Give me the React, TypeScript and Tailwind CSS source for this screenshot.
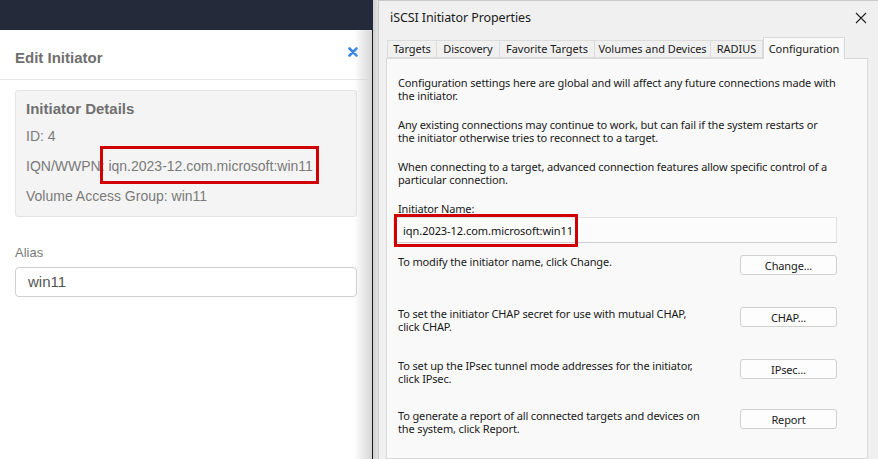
import React from "react";

const Tab = ({ label, w, active }: { label: string; w: string; active?: boolean }) => (
  <div
    className={
      active
        ? `${w} h-[22px] -mb-px relative z-10 bg-[#f9f9f9] border border-[#d9d9d9] border-b-0 flex items-start justify-center pt-[3px] text-[#1a1a1a]`
        : `${w} h-[18px] bg-[#f0f0f0] border border-[#dcdcdc] border-l-0 first:border-l flex items-center justify-center text-[#1a1a1a]`
    }
  >
    {label}
  </div>
);

const WinButton = ({ label }: { label: string }) => (
  <div className="w-[97px] h-[20px] shrink-0 rounded-[3px] border border-[#d0d0d0] bg-[#fdfdfd] flex items-center justify-center text-[#1a1a1a]">
    {label}
  </div>
);

export default function App() {
  return (
    <div className="w-[878px] h-[459px] flex overflow-hidden bg-[#f0f0f0]">
      {/* Left web panel */}
      <div
        className="w-[373px] shrink-0 flex flex-col bg-white"
        style={{ fontFamily: '"Liberation Sans", Arial, sans-serif' }}
      >
        <div className="h-[30px] bg-[#252a3b]" />
        <div className="flex-1 relative border-r border-[#1a1a1a]">
          <div className="h-[50px] border-b border-[#e5e5e5] flex items-center justify-between pl-[15px] pr-[14px]">
            <span className="text-[15px] font-bold text-[#6f6f6f] pt-[8px]">Edit Initiator</span>
            <svg width="10" height="10" viewBox="0 0 10 10" className="-mt-[6px]">
              <path d="M1.5 1.5 L8.5 8.5 M8.5 1.5 L1.5 8.5" stroke="#3a86e0" strokeWidth="2.6" strokeLinecap="round" />
            </svg>
          </div>
          <div className="px-[15px] pt-[10px]">
            <div className="w-[342px] bg-[#f4f4f4] border border-[#e4e4e4] rounded-[3px] pl-[10px] pt-[8px] pb-[5px] text-[#7a7a7a]">
              <div className="h-[20px] leading-[20px] text-[15px] font-bold text-[#707070]">Initiator Details</div>
              <div className="mt-[2px] h-[30px] leading-[30px] text-[14px]">ID: 4</div>
              <div className="h-[30px] leading-[30px] text-[14px] whitespace-nowrap">
                IQN/WWPN:{" "}
                <span className="relative">
                  iqn.2023-12.com.microsoft:win11
                  <span className="absolute left-[-8px] right-[-6px] top-[-12px] bottom-[-10px] border-[3px] border-[#d00000]" />
                </span>
              </div>
              <div className="h-[30px] leading-[30px] text-[14px]">Volume Access Group: win11</div>
            </div>
            <div className="mt-[28px] text-[13px] text-[#7a7a7a] leading-[16px]">Alias</div>
            <div className="mt-[6px] w-[342px] h-[30px] border border-[#cfcfcf] rounded-[4px] flex items-center pl-[12px] text-[15px] text-[#555]">
              win11
            </div>
          </div>
          <div className="absolute top-0 right-0 bottom-0 w-[18px] bg-gradient-to-r from-[#ffffff00] to-[#d6d6d6]" />
        </div>
      </div>

      {/* Windows dialog */}
      <div
        className="flex-1 min-w-0 flex"
        style={{ fontFamily: '"Noto Sans", "Open Sans", sans-serif' }}
      >
        <div className="w-[5px] shrink-0 bg-gradient-to-r from-[#cfcfcf] to-[#e4e4e4]" />
        <div className="flex-1 min-w-0 flex flex-col bg-[#f0f0f0] border-l border-t border-[#c8c8c8]">
          <div className="h-[34px] flex items-center justify-between pl-[11px] pr-[11px]">
            <span className="text-[12.5px] text-[#1a1a1a] tracking-[-0.1px]">iSCSI Initiator Properties</span>
            <svg width="12" height="12" viewBox="0 0 12 12">
              <path d="M1 1 L11 11 M11 1 L1 11" stroke="#222" strokeWidth="1.1" />
            </svg>
          </div>
          <div className="pl-[7px] pr-[10px] flex-1 min-w-0 flex flex-col text-[11px] tracking-[-0.05px]">
            <div className="flex items-end h-[23px] pl-[1px]">
              <Tab label="Targets" w="w-[50px]" />
              <Tab label="Discovery" w="w-[63px]" />
              <Tab label="Favorite Targets" w="w-[95px]" />
              <Tab label="Volumes and Devices" w="w-[116px]" />
              <Tab label="RADIUS" w="w-[52px]" />
              <Tab label="Configuration" w="w-[82px]" active />
            </div>
            <div className="flex-1 min-w-0 bg-[#f9f9f9] border border-[#d9d9d9] pl-[11px] pr-[30px] pt-[17px] text-[#1a1a1a] leading-[13px] whitespace-nowrap tracking-[-0.14px]">
              <p>
                Configuration settings here are global and will affect any future connections made with
                <br />
                the initiator.
              </p>
              <p className="mt-[16px]">
                Any existing connections may continue to work, but can fail if the system restarts or
                <br />
                the initiator otherwise tries to reconnect to a target.
              </p>
              <p className="mt-[16px]">
                When connecting to a target, advanced connection features allow specific control of a
                <br />
                particular connection.
              </p>
              <p className="mt-[16px]">Initiator Name:</p>
              <div className="mt-[2px] -ml-[5px] h-[26px] bg-[#fcfcfc] border border-[#e2e2e2] border-b-[#cfcfcf] flex items-center pl-[9px] relative tracking-[-0.05px]">
                <span className="relative text-[#111]">
                  iqn.2023-12.com.microsoft:win11
                  <span className="absolute left-[-9px] right-[-5px] top-[-10px] bottom-[-10px] border-[3px] border-[#d00000]" />
                </span>
              </div>
              <div className="mt-[12px] flex items-start justify-between">
                <p>To modify the initiator name, click Change.</p>
                <WinButton label="Change..." />
              </div>
              <div className="mt-[32px] flex items-start justify-between">
                <p>
                  To set the initiator CHAP secret for use with mutual CHAP,
                  <br />
                  click CHAP.
                </p>
                <WinButton label="CHAP..." />
              </div>
              <div className="mt-[26px] flex items-start justify-between">
                <p>
                  To set up the IPsec tunnel mode addresses for the initiator,
                  <br />
                  click IPsec.
                </p>
                <WinButton label="IPsec..." />
              </div>
              <div className="mt-[24px] flex items-start justify-between">
                <p>
                  To generate a report of all connected targets and devices on
                  <br />
                  the system, click Report.
                </p>
                <WinButton label="Report" />
              </div>
            </div>
          </div>
        </div>
      </div>
    </div>
  );
}
